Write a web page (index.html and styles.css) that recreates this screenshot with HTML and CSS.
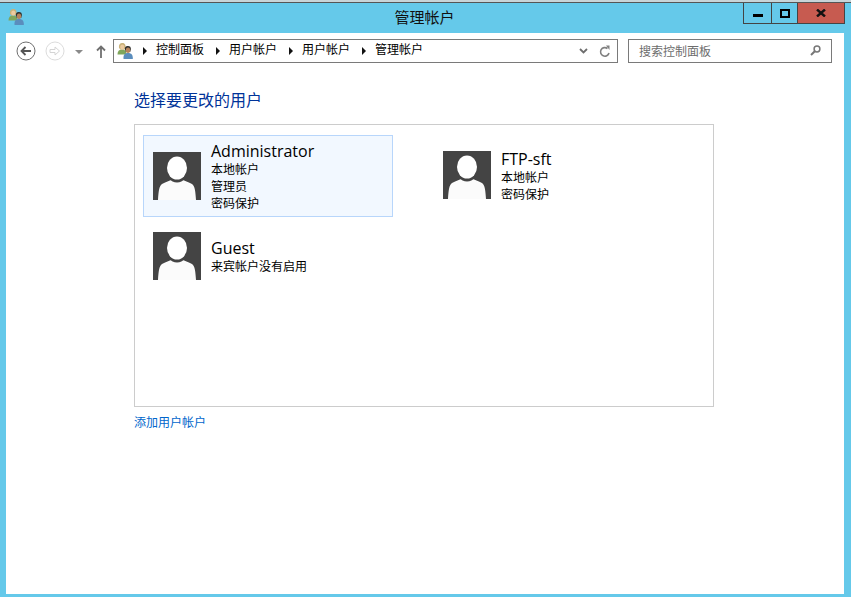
FILE: index.html
```html
<!DOCTYPE html>
<html lang="zh-CN">
<head>
<meta charset="utf-8">
<title>管理帐户</title>
<link rel="stylesheet" href="styles.css">
</head>
<body>
<svg class="defs" width="0" height="0" aria-hidden="true">
  <defs>
    <symbol id="people" viewBox="0 0 16 16">
      <path d="M0.500 11.500c0-3.500 1.500-5 4.500-5s4.500 1.500 4.500 5z" fill="#7fa65c"/>
      <path d="M2 5c-.5-4 1.500-5 3.500-5S9 1.500 8.500 5L7.500 6.500h-4z" fill="#c9b27a"/>
      <ellipse cx="5.300" cy="4" rx="2.100" ry="2.500" fill="#eccba0"/>
      <path d="M6.500 16c-.3-4 1-6 4.500-6s5 2 4.800 6z" fill="#5a8dbd"/>
      <path d="M8 6.500C7.600 3.500 9.200 3 11 3s3.200 1 2.800 3.500l-.6 2.500H8.800z" fill="#30302e"/>
      <ellipse cx="11" cy="7.300" rx="2.200" ry="2.700" fill="#b5835c"/>
    </symbol>
    <symbol id="avatar" viewBox="0 0 48 48">
      <rect width="48" height="48" fill="#444"/>
      <path d="M5 48C5.500 40 6 34 9 32c3-2 8-3 11-5h8c3 2 8 3 11 5 3 2 3.500 8 4 16z" fill="#fbfbfb"/>
      <ellipse cx="24" cy="17" rx="11.500" ry="13.500" fill="#444"/>
      <ellipse cx="24" cy="16" rx="10" ry="11.500" fill="#fff"/>
    </symbol>
  </defs>
</svg>
<div class="window">
  <header class="titlebar">
    <svg class="app-icon"><use href="#people"/></svg>
    <div class="title">管理帐户</div>
    <div class="controls">
      <div class="ctl ctl-min"><span class="glyph-min"></span></div>
      <div class="ctl ctl-max"><span class="glyph-max"></span></div>
      <div class="ctl ctl-close">
        <svg width="10" height="8" viewBox="0 0 10 8"><path d="M1 .5l8 7M9 .5l-8 7" stroke="#111" stroke-width="2.400" fill="none"/></svg>
      </div>
    </div>
  </header>
  <main class="client">
    <nav class="toolbar">
      <svg class="nav-btn" width="20" height="20" viewBox="0 0 20 20"><circle cx="10" cy="10" r="9" fill="#fff" stroke="#6e6e6e" stroke-width="1"/><path d="M15 10H6M9.500 6l-4 4 4 4" fill="none" stroke="#555" stroke-width="1.800"/></svg>
      <svg class="nav-btn nav-fwd" width="20" height="20" viewBox="0 0 20 20"><circle cx="10" cy="10" r="9" fill="#fff" stroke="#dcdcdc" stroke-width="1"/><path d="M5 8.500h5V6l4.500 4-4.500 4v-2.500H5z" fill="none" stroke="#d4d4d4" stroke-width="1"/></svg>
      <svg class="nav-drop" width="8" height="4" viewBox="0 0 8 4"><path d="M0 0h8L4 4z" fill="#8a8a8a"/></svg>
      <svg class="nav-up" width="10" height="13" viewBox="0 0 10 13"><path d="M5 13V2M1 5.500L5 1.500l4 4" fill="none" stroke="#707070" stroke-width="1.800"/></svg>
      <div class="address">
        <svg class="addr-icon"><use href="#people"/></svg>
        <span class="crumb-arrow"></span><span class="crumb">控制面板</span>
        <span class="crumb-arrow"></span><span class="crumb">用户帐户</span>
        <span class="crumb-arrow"></span><span class="crumb">用户帐户</span>
        <span class="crumb-arrow"></span><span class="crumb">管理帐户</span>
        <div class="addr-end">
          <svg width="9" height="6" viewBox="0 0 9 6"><path d="M1 1l3.500 3.500L8 1" fill="none" stroke="#6e6e6e" stroke-width="1.800"/></svg>
          <svg width="12" height="13" viewBox="0 0 12 13"><path d="M10 8a4.300 4.300 0 1 1-1.500-4.500" fill="none" stroke="#808080" stroke-width="1.600"/><path d="M7 .5h3.500V5z" fill="#808080"/></svg>
        </div>
      </div>
      <div class="search">
        <span class="search-text">搜索控制面板</span>
        <svg width="11" height="11" viewBox="0 0 11 11"><circle cx="7" cy="4" r="2.900" fill="none" stroke="#777" stroke-width="1.500"/><path d="M4.800 6.200L1 10" stroke="#777" stroke-width="2"/></svg>
      </div>
    </nav>
    <section class="content">
      <h1 class="heading">选择要更改的用户</h1>
      <div class="panel">
        <div class="user user-selected">
          <svg class="avatar"><use href="#avatar"/></svg>
          <div class="info">
            <div class="name">Administrator</div>
            <div class="meta">本地帐户</div>
            <div class="meta">管理员</div>
            <div class="meta">密码保护</div>
          </div>
        </div>
        <div class="user user-raised">
          <svg class="avatar"><use href="#avatar"/></svg>
          <div class="info">
            <div class="name">FTP-sft</div>
            <div class="meta">本地帐户</div>
            <div class="meta">密码保护</div>
          </div>
        </div>
        <div class="user">
          <svg class="avatar"><use href="#avatar"/></svg>
          <div class="info">
            <div class="name">Guest</div>
            <div class="meta">来宾帐户没有启用</div>
          </div>
        </div>
      </div>
      <a class="add-link">添加用户帐户</a>
    </section>
  </main>
</div>
</body>
</html>
```

FILE: styles.css
```css
* { box-sizing: border-box; }
html, body { margin: 0; height: 100%; overflow: hidden; }
body { font-family: "Noto Sans CJK SC", "Open Sans", sans-serif; color: #000; font-size: 12px; }
.defs { display: block; height: 0; }
.window { width: 851px; height: 597px; background: #65c9ea; border-top: 2px solid #c8d4d8; display: flex; flex-direction: column; padding: 0 7px 3px 6px; box-shadow: inset 0 1px 0 #555; }
.titlebar { height: 31px; display: flex; align-items: flex-start; flex: none; position: relative; }
.app-icon { width: 16px; height: 16px; margin: 7px 0 0 2px; }
.title { position: absolute; left: -8px; right: -7px; top: 4px; text-align: center; font-size: 15px; line-height: 21px; color: #111; }
.controls { position: absolute; right: -1px; top: 1px; display: flex; height: 21px; border: 1px solid #444; border-top: 0; }
.ctl { display: flex; align-items: center; justify-content: center; }
.ctl-min { width: 28px; border-right: 1px solid #444; }
.ctl-max { width: 26px; border-right: 1px solid #444; }
.ctl-close { width: 46px; background: #c75b50; }
.glyph-min { width: 10px; height: 3px; background: #000; margin-top: 5px; }
.glyph-max { width: 10px; height: 9px; border: 2px solid #000; }
.client { flex: 1; background: #fff; display: flex; flex-direction: column; min-height: 0; }
.toolbar { display: flex; align-items: center; height: 36px; padding: 0 12px 0 10px; flex: none; }
.nav-fwd { margin-left: 9px; }
.nav-drop { margin-left: 10px; margin-top: 2px; }
.nav-up { margin-left: 13px; margin-top: 1px; }
.address { margin-left: 7px; width: 505px; height: 24px; border: 1px solid #7a7a7a; display: flex; align-items: center; padding-left: 3px; font-size: 12px; }
.addr-icon { width: 16px; height: 16px; flex: none; margin-right: 10px; }
.crumb-arrow { flex: none; width: 0; height: 0; border-left: 4px solid #111; border-top: 4px solid transparent; border-bottom: 4px solid transparent; margin-right: 9px; margin-bottom: 1px; }
.crumb { margin-right: 12px; white-space: nowrap; line-height: 16px; padding-bottom: 4px; }
.addr-end { margin-left: auto; display: flex; align-items: center; gap: 11px; padding-right: 6px; }
.search { margin-left: 10px; width: 204px; height: 24px; border: 1px solid #7a7a7a; display: flex; align-items: center; justify-content: space-between; padding: 0 10px 2px 10px; color: #6d6d6d; }
.content { padding: 20px 0 0 128px; display: flex; flex-direction: column; align-items: flex-start; }
.heading { margin: 0; font-size: 16px; font-weight: 400; line-height: 21px; color: #003399; }
.panel { margin-top: 14px; width: 580px; height: 283px; border: 1px solid #cccccc; padding: 10px 8px; display: grid; grid-template-columns: 250px 250px; grid-template-rows: 82px 64px; column-gap: 40px; row-gap: 7px; align-content: start; }
.user { display: flex; align-items: center; padding: 0 9px; gap: 10px; border: 1px solid transparent; }
.user-selected { background: #f2f8ff; border-color: #b8d6fb; }
.user-raised { padding-bottom: 2px; }
.avatar { width: 48px; height: 48px; flex: none; }
.info { display: flex; flex-direction: column; }
.name { font-family: "Open Sans", sans-serif; font-size: 16px; line-height: 19px; color: #000; padding-top: 1px; margin-bottom: -1px; height: 20px; }
.meta { font-size: 12px; line-height: 17px; }
.add-link { margin-top: 6px; color: #0066cc; font-size: 12px; line-height: 18px; }
```
